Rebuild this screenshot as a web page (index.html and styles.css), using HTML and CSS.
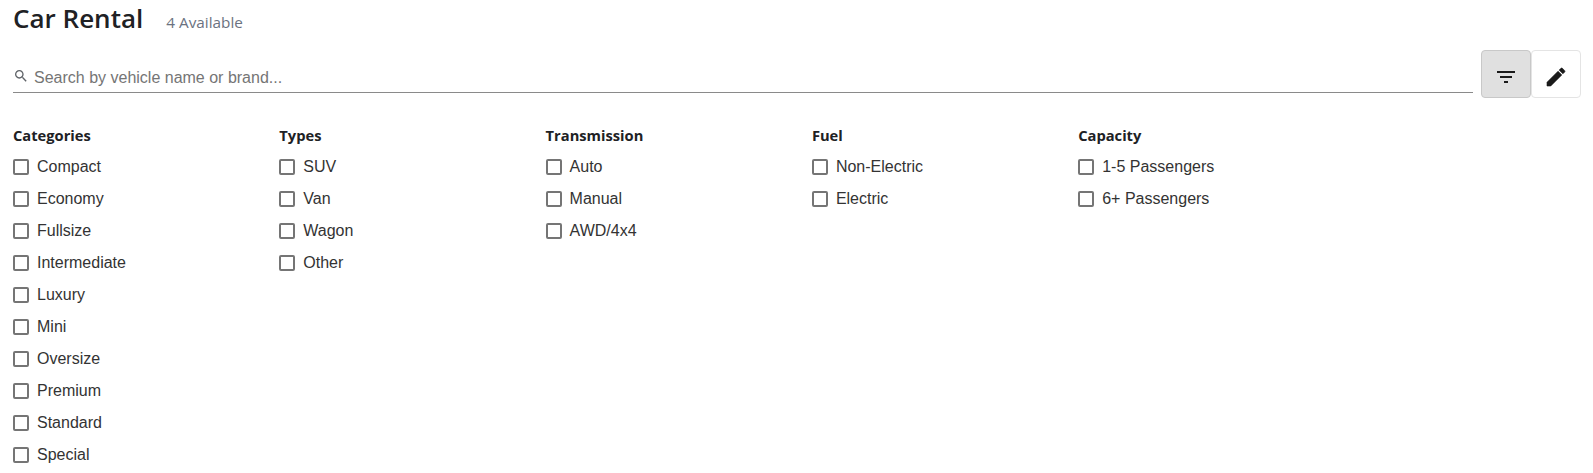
FILE: index.html
```html
<!DOCTYPE html>
<html lang="en">
<head>
    <meta charset="UTF-8">
    <title>Car Rental</title>
    <link rel="stylesheet" href="styles.css">
</head>
<body>
    <div class="page-header">
        <h1 class="page-title">Car Rental</h1>
        <span class="page-count">4 Available</span>
    </div>

    <div class="search-row">
        <div class="search-box">
            <svg class="search-icon" viewBox="0 0 24 24"><path d="M15.5 14h-.79l-.28-.27C15.41 12.59 16 11.11 16 9.5 16 5.91 13.09 3 9.5 3S3 5.91 3 9.5 5.91 16 9.5 16c1.61 0 3.09-.59 4.23-1.57l.27.28v.79l5 4.99L20.49 19l-4.99-5zm-6 0C7.01 14 5 11.99 5 9.5S7.01 5 9.5 5 14 7.01 14 9.5 11.99 14 9.5 14z"/></svg>
            <span class="search-text">Search by vehicle name or brand...</span>
        </div>
        <div class="tool-btn tool-btn-active">
            <svg class="tool-icon" viewBox="0 0 24 24"><path d="M10 18h4v-2h-4v2zM3 6v2h18V6H3zm3 7h12v-2H6v2z"/></svg>
        </div>
        <div class="tool-btn">
            <svg class="tool-icon tool-icon-edit" viewBox="0 0 24 24"><path d="M3 17.25V21h3.75L17.81 9.94l-3.75-3.75L3 17.25zM20.71 7.04c.39-.39.39-1.02 0-1.41l-2.34-2.34c-.39-.39-1.02-.39-1.41 0l-1.83 1.83 3.75 3.75 1.83-1.83z"/></svg>
        </div>
    </div>

    <div class="filters">
        <div class="filter-col">
            <div class="filter-title">Categories</div>
            <label class="filter-item"><span class="box"></span>Compact</label>
            <label class="filter-item"><span class="box"></span>Economy</label>
            <label class="filter-item"><span class="box"></span>Fullsize</label>
            <label class="filter-item"><span class="box"></span>Intermediate</label>
            <label class="filter-item"><span class="box"></span>Luxury</label>
            <label class="filter-item"><span class="box"></span>Mini</label>
            <label class="filter-item"><span class="box"></span>Oversize</label>
            <label class="filter-item"><span class="box"></span>Premium</label>
            <label class="filter-item"><span class="box"></span>Standard</label>
            <label class="filter-item"><span class="box"></span>Special</label>
        </div>
        <div class="filter-col">
            <div class="filter-title">Types</div>
            <label class="filter-item"><span class="box"></span>SUV</label>
            <label class="filter-item"><span class="box"></span>Van</label>
            <label class="filter-item"><span class="box"></span>Wagon</label>
            <label class="filter-item"><span class="box"></span>Other</label>
        </div>
        <div class="filter-col">
            <div class="filter-title">Transmission</div>
            <label class="filter-item"><span class="box"></span>Auto</label>
            <label class="filter-item"><span class="box"></span>Manual</label>
            <label class="filter-item"><span class="box"></span>AWD/4x4</label>
        </div>
        <div class="filter-col">
            <div class="filter-title">Fuel</div>
            <label class="filter-item"><span class="box"></span>Non-Electric</label>
            <label class="filter-item"><span class="box"></span>Electric</label>
        </div>
        <div class="filter-col">
            <div class="filter-title">Capacity</div>
            <label class="filter-item"><span class="box"></span>1-5 Passengers</label>
            <label class="filter-item"><span class="box"></span>6+ Passengers</label>
        </div>
    </div>
</body>
</html>
```

FILE: styles.css
```css
body {
    margin: 0;
    height: 473px;
    overflow: hidden;
    padding: 0 12px 0 13px;
    box-sizing: border-box;
    background-color: #FFFFFF;
    color: #202124;
    font-family: "Liberation Sans", Arial, sans-serif;
}

.page-header {
    display: flex;
    align-items: baseline;
    height: 38px;
}

.page-title {
    margin: 0;
    font-family: "Open Sans", sans-serif;
    font-size: 26px;
    font-weight: 600;
    line-height: 37px;
}

.page-count {
    margin-left: 23px;
    font-family: "Open Sans", sans-serif;
    font-size: 15.3px;
    color: #6B7280;
}

.search-row {
    display: flex;
    align-items: flex-start;
    margin-top: 12px;
}

.search-box {
    flex: 1;
    display: flex;
    align-items: center;
    height: 43px;
    padding-top: 14px;
    box-sizing: border-box;
    border-bottom: 1px solid #8A8A8A;
}

.search-icon {
    width: 16px;
    height: 16px;
    margin-top: -4px;
    margin-right: 5px;
    fill: #5F6368;
}

.search-text {
    font-size: 16px;
    color: #757575;
}

.tool-btn {
    display: flex;
    align-items: center;
    justify-content: center;
    width: 50px;
    height: 48px;
    padding-top: 5px;
    border: 1px solid #E4E4E4;
    border-radius: 4px;
    box-sizing: border-box;
    background-color: #FFFFFF;
}

.search-box + .tool-btn {
    margin-left: 8px;
}

.tool-btn-active {
    background-color: #E0E0E0;
    border-color: #C8C8C8;
}

.tool-icon {
    width: 24px;
    height: 24px;
    fill: #1A1A1A;
}

.tool-icon-edit {
    stroke: #1A1A1A;
    stroke-width: 0.6;
}

.filters {
    display: flex;
    margin-top: 27px;
}

.filter-col {
    width: 266.3px;
}

.filter-title {
    height: 26px;
    font-family: "Open Sans", sans-serif;
    font-size: 14.7px;
    font-weight: 700;
    line-height: 20px;
}

.filter-item {
    display: flex;
    align-items: center;
    height: 32px;
    font-size: 16px;
    color: #333333;
}

.box {
    width: 16px;
    height: 16px;
    margin-right: 8px;
    border: 2px solid #757575;
    border-radius: 2px;
    box-sizing: border-box;
}
```
